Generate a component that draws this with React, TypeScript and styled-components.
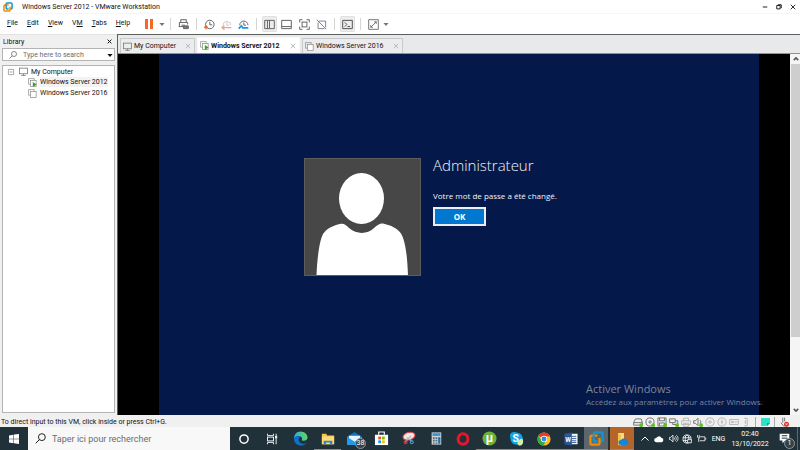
import React from "react";
import styled, { createGlobalStyle, css } from "styled-components";

const GlobalStyle = createGlobalStyle`
  *, *::before, *::after { box-sizing: border-box; }
  html, body { margin: 0; }
  body { font-family: Roboto, "Open Sans", sans-serif; font-size: 7px; line-height: 10px; color: #111; overflow: hidden; }
  button, input { font: inherit; color: inherit; border: 0; padding: 0; margin: 0; background: none; }
  button { display: flex; align-items: center; justify-content: center; white-space: nowrap; }
  ul { list-style: none; margin: 0; padding: 0; }
  svg { display: block; flex: none; overflow: visible; }
`;

const Screen = styled.div`
  display: flex;
  flex-direction: column;
  height: 100vh;
  background: #fff;
`;

const TitleBar = styled.header`
  display: flex;
  align-items: center;
  height: 13px;
  padding-left: 3px;
  gap: 9px;
  flex: none;
`;
const Title = styled.h1`
  flex: 1;
  margin: 0;
  font-size: 7px;
  font-weight: 400;
  white-space: nowrap;
`;
const WindowButtons = styled.div`
  display: flex;
  gap: 4px;
  padding-right: 2px;
`;
const WindowButton = styled.button`
  width: 10px;
  height: 12px;
`;

const MenuRow = styled.div`
  display: flex;
  align-items: center;
  height: 21px;
  flex: none;
  border-top: 1px solid #f6f6f6;
`;
const Menus = styled.nav`
  display: flex;
  gap: 9px;
  padding: 0 0 3px 7px;
  width: 140px;
`;
const MenuButton = styled.button``;
const Toolbar = styled.div`
  display: flex;
  align-items: center;
`;
const Tool = styled.button<{ $active?: boolean; $width?: number }>`
  width: ${(p) => p.$width ?? 15}px;
  height: 16px;
  margin: 0 1px;
  border-radius: 2px;
  ${(p) => p.$active && css`background: #ededed; box-shadow: inset 0 0 0 1px #e0e0e0;`}
`;
const Separator = styled.span`
  width: 1px;
  height: 12px;
  margin: 0 4px;
  background: #d4d4d4;
`;

const Workspace = styled.div`
  display: flex;
  flex: 1;
  min-height: 0;
`;

const Sidebar = styled.aside`
  display: flex;
  flex-direction: column;
  width: 117px;
  flex: none;
  padding: 0 2px 2px;
  background: #f0f0f1;
  border-top: 1px solid #e2e2e2;
`;
const SidebarHeader = styled.div`
  display: flex;
  align-items: center;
  justify-content: space-between;
  height: 13px;
  padding: 0 3px 0 1px;
`;
const SidebarTitle = styled.h2`
  margin: 0;
  font-size: 7px;
  font-weight: 400;
`;
const SearchBox = styled.label`
  display: flex;
  align-items: center;
  height: 13px;
  margin-bottom: 4px;
  padding: 0 1px 0 6px;
  gap: 6px;
  background: #fff;
  border: 1px solid #b4b4b4;
`;
const SearchInput = styled.input`
  flex: 1;
  min-width: 0;
  outline: 0;
  &::placeholder { color: #6c6c6c; opacity: 1; }
`;
const Tree = styled.ul`
  flex: 1;
  padding: 0 4px;
  background: #fff;
  border: 1px solid #b4b4b4;
`;
const TreeRow = styled.div<{ $level?: number }>`
  display: flex;
  align-items: center;
  height: ${(p) => (p.$level ? 10 : 11)}px;
  margin-bottom: ${(p) => (p.$level ? 1 : 0)}px;
  padding-left: ${(p) => (p.$level ? 21 : 1)}px;
  gap: 3px;
  white-space: nowrap;
`;
const TreeLabel = styled.span<{ $selected?: boolean }>`
  background: ${(p) => (p.$selected ? "#f3f3f3" : "transparent")};
`;
const TreeToggle = styled.button`
  margin-right: 2px;
`;

const Main = styled.main`
  display: flex;
  flex-direction: column;
  flex: 1;
  min-width: 0;
  border-top: 1px solid #5b605d;
  border-left: 1px solid #5b605d;
`;
const Tabs = styled.div`
  display: flex;
  align-items: flex-end;
  height: 19px;
  padding-left: 2px;
  gap: 2px;
  flex: none;
  background: #e8e9eb;
  border-bottom: 1px solid #8f9398;
`;
const Tab = styled.div<{ $active?: boolean; $width: number }>`
  display: flex;
  align-items: center;
  width: ${(p) => p.$width}px;
  height: ${(p) => (p.$active ? 16 : 15)}px;
  padding: 0 3px 0 2px;
  gap: 2px;
  background: ${(p) => (p.$active ? "#fff" : "#ebecee")};
  border: 1px solid ${(p) => (p.$active ? "#f8f8f8" : "#c9cacc")};
  border-bottom: 0;
  font-weight: ${(p) => (p.$active ? 700 : 400)};
`;
const TabLabel = styled.button`
  flex: 1;
  justify-content: flex-start;
`;

const Console = styled.div`
  display: flex;
  flex: 1;
  min-height: 0;
  background: #000;
`;
const GuestArea = styled.div`
  position: relative;
  display: flex;
  flex: 1;
  padding: 0 31px 0 41px;
  font-family: "Open Sans", "Noto Sans", sans-serif;
`;
const GuestScreen = styled.section`
  display: flex;
  flex: 1;
  align-items: flex-start;
  gap: 12px;
  padding: 104px 0 0 145px;
  background: #041849;
`;
const Avatar = styled.svg`
  width: 117px;
  height: 118px;
  background: #474747;
`;
const Account = styled.div`
  display: flex;
  flex-direction: column;
  align-items: flex-start;
  color: #f2f4f8;
`;
const AccountName = styled.h2`
  margin: -4px 0 14px;
  font-size: 15px;
  font-weight: 300;
  line-height: 22px;
`;
const AccountMessage = styled.p`
  margin: 0 0 5px;
  font-size: 8px;
  line-height: 12px;
`;
const OkButton = styled.button`
  width: 53px;
  height: 19px;
  background: #0078d0;
  border: 2px solid #e9eef8;
  font-size: 8px;
  font-weight: 700;
  color: #fff;
`;
const Watermark = styled.div`
  position: absolute;
  left: 468px;
  bottom: 7px;
  color: #7f8596;
  font-size: 8px;
  line-height: 12px;
  white-space: nowrap;
`;
const WatermarkTitle = styled.div`
  font-size: 11px;
  line-height: 14px;
`;

const Scrollbar = styled.div`
  display: flex;
  flex-direction: column;
  align-items: stretch;
  width: 10px;
  background: #f5f5f5;
  padding-left: 1px;
`;
const ScrollButton = styled.button`
  height: 10px;
  flex: none;
`;
const ScrollTrack = styled.div`
  flex: 1;
`;
const ScrollThumb = styled.div`
  height: 80%;
  background: #cecece;
`;

const StatusBar = styled.footer`
  display: flex;
  align-items: center;
  justify-content: space-between;
  height: 12px;
  flex: none;
  padding: 1px 11px 0 1px;
  background: #f0f0f1;
  white-space: nowrap;
`;
const Devices = styled.div`
  display: flex;
  align-items: center;
  gap: 2px;
`;
const Device = styled.button<{ $off?: boolean }>`
  width: 10px;
  height: 11px;
  opacity: ${(p) => (p.$off ? 0.45 : 1)};
`;
const DeviceLine = styled.span`
  width: 1px;
  height: 10px;
  margin: 0 2px;
  background: #aaa;
`;

const Taskbar = styled.footer`
  display: flex;
  align-items: stretch;
  height: 23px;
  flex: none;
  background: #20313a;
  color: #fff;
`;
const StartButton = styled.button`
  width: 28px;
  flex: none;
`;
const TaskSearch = styled.label`
  display: flex;
  align-items: center;
  width: 202px;
  flex: none;
  gap: 6px;
  padding-left: 7px;
  background: #f8f8f8;
  color: #444;
  font-size: 9px;
`;
const TaskApps = styled.div`
  display: flex;
  flex: 1;
`;
const TaskApp = styled.button<{ $wide?: boolean; $open?: boolean; $tint?: string }>`
  position: relative;
  flex: none;
  width: ${(p) => (p.$wide ? 28 : p.$tint ? 24 : 27)}px;
  margin-right: ${(p) => (p.$tint ? 2 : 0)}px;
  background: ${(p) => p.$tint ?? "transparent"};
  ${(p) => p.$open && css`box-shadow: inset 0 -1px 0 #8f8b84;`}
`;
const Badge = styled.span`
  position: absolute;
  right: 2px;
  bottom: 1px;
  min-width: 11px;
  height: 11px;
  border-radius: 6px;
  background: #35434a;
  border: 1px solid #8d979b;
  font-size: 7px;
  line-height: 9px;
  text-align: center;
`;
const Tray = styled.div`
  display: flex;
  flex: none;
  align-items: center;
`;
const TrayButton = styled.button`
  width: 14px;
  height: 23px;
`;
const Language = styled.button`
  width: 21px;
`;
const Clock = styled.time`
  display: flex;
  flex-direction: column;
  align-items: center;
  width: 42px;
  line-height: 10px;
`;
const NotificationButton = styled.button`
  position: relative;
  width: 26px;
  height: 23px;
`;
const ShowDesktop = styled.button`
  width: 3px;
  height: 23px;
  border-left: 1px solid #5c686e;
`;

type SvgProps = { size?: number; children: React.ReactNode; color?: string; w?: number };
const Icon = ({ size = 12, color = "#555", w = 1, children }: SvgProps) => (
  <svg width={size} height={size} viewBox="0 0 16 16" fill="none" stroke={color} strokeWidth={w * (16 / size)} aria-hidden="true">
    {children}
  </svg>
);

const VmwareIcon = ({ size = 10 }: { size?: number }) => (
  <svg width={size} height={size} viewBox="0 0 16 16" fill="none" strokeWidth="2.4" aria-hidden="true">
    <path d="M5 4V3a1.5 1.5 0 0 1 1.500-1.500H13A1.500 1.500 0 0 1 14.500 3v6.500A1.500 1.500 0 0 1 13 11h-1" stroke="#1296d4" />
    <path d="M9 4.800H3A1.500 1.500 0 0 0 1.500 6.300V13A1.500 1.500 0 0 0 3 14.500h6.700a1.500 1.500 0 0 0 1.500-1.500V7.500" stroke="#f38b00" />
    <path d="M5 4v5.500A1.500 1.500 0 0 0 6.500 11H9" stroke="#1296d4" />
  </svg>
);
const Monitor = () => (
  <Icon size={9} w={0.8} color="#777"><rect x="1" y="2" width="14" height="10" /><path d="M4 15h8M8 12v3" /></Icon>
);
const VmIcon = ({ running }: { running?: boolean }) => (
  <Icon size={9} w={0.7} color="#888">
    <path d="M4 11H1V1h10v3" /><rect x="4.500" y="4.500" width="10" height="10.500" fill="#fff" />
    {running && <path d="M8.500 7v9l7-4.500z" fill="#35a51c" stroke="none" />}
  </Icon>
);
const Cross = ({ color = "#999", size = 6 }: { color?: string; size?: number }) => (
  <Icon size={size} color={color}><path d="M2 2l12 12M14 2L2 14" /></Icon>
);
const Caret = ({ color = "#777" }: { color?: string }) => (
  <Icon size={6} color={color}><path d="M1 5h14L8 13z" fill={color} stroke="none" /></Icon>
);
const Magnifier = ({ size, color }: { size: number; color: string }) => (
  <Icon size={size} color={color}><circle cx="10" cy="6" r="5" /><path d="M6.500 9.500L1 15" /></Icon>
);
const ClockIcon = ({ main, accent, kind }: { main: string; accent: string; kind: "take" | "back" | "manage" }) => (
  <Icon size={11} color={main}>
    {kind === "take" && <><circle cx="8.500" cy="8" r="6.200" /><path d="M8.500 4v4.500H12" /><path d="M0 12h6M3 9v6" stroke={accent} strokeWidth="2" /></>}
    {kind === "back" && <><path d="M3 9a5.500 5.500 0 0 1 11 0M8.500 5v4h3" /><path d="M15 12.500H2M5 9.500l-3.500 3 3.500 3" stroke={accent} strokeWidth="2" /></>}
    {kind === "manage" && <><path d="M2.500 9a6 6 0 1 1 12 0M8.500 5v4h3" /><path d="M1 14l4-4 2 3h8" stroke={accent} strokeWidth="2.600" /></>}
  </Icon>
);

const green = <circle cx="13" cy="13" r="3" fill="#55c51e" stroke="none" />;
const deviceIcons: { name: string; off?: boolean; art: React.ReactNode }[] = [
  { name: "Hard disk", art: <><path d="M4 3h9l2 6v4H1V9z M1 9h14" />{green}</> },
  { name: "CD/DVD", art: <><circle cx="8" cy="8" r="6.500" /><circle cx="8" cy="8" r="1.800" />{green}</> },
  { name: "Floppy", art: <><path d="M1.500 1.500h13v13h-13z M4 1.500V6h8V1.500 M4 14V9.500h8V14" />{green}</> },
  { name: "Network adapter", art: <><path d="M1 3h9v6H1z M6 9v3h8V6h-4" />{green}</> },
  { name: "Printer", off: true, art: <path d="M4 6V2h8v4 M1 6h14v6H1z M4 10h8v5H4z" /> },
  { name: "Sound", art: <><path d="M1 6h3l4-4v12l-4-4H1z M11 5c2 2 2 4 0 6" />{green}</> },
  { name: "USB 1", off: true, art: <><circle cx="8" cy="8" r="6.500" /><circle cx="8" cy="8" r="2" /></> },
  { name: "USB 2", off: true, art: <><circle cx="8" cy="8" r="6.500" /><path d="M8 4v8M6 8h4" /></> },
  { name: "Serial port", off: true, art: <path d="M1 4h14v8H1z M4 7h3v2H4z M9 8h4" /> },
  { name: "Bluetooth", off: true, art: <path d="M5 2h5v12H5 M7 5v6" /> },
];

const taskApps: { name: string; wide?: boolean; open?: boolean; badge?: string; art: React.ReactNode }[] = [
  { name: "Cortana", wide: true, art: <Icon size={12} w={1.500} color="#fff"><circle cx="8" cy="8" r="5.500" /></Icon> },
  { name: "Task view", wide: true, art: <Icon size={12} color="#e8ebec"><path d="M2 1v2.500h8V1 M2 15v-2.500h8V15" /><rect x="2" y="5.500" width="8" height="5" /><path d="M13.500 1v14" /><path d="M13.500 4v3" strokeWidth="3" /></Icon> },
  {
    name: "Microsoft Edge", wide: true, art: (
      <svg width="15" height="15" viewBox="0 0 16 16">
        <defs>
          <linearGradient id="edgeTop" x1="0" x2="1" y1="0.500" y2="0.300"><stop stopColor="#28a8e8" /><stop offset="1" stopColor="#66d957" /></linearGradient>
        </defs>
        <path d="M1 8C1 3.500 4 .5 8 .5s7.500 3 7.500 6.500c0 2-1.500 3.500-4 3.500-1.500 0-2.500-.5-2-1.500C10 7 9 5.500 6.500 5.500 4 5.500 1.500 6.500 1 8z" fill="url(#edgeTop)" />
        <path d="M1 8c1-2.500 5-3.500 6.800-1.500C5 7.500 5.500 13 10 13.500c2 .2 3.500-.5 4.500-1C13 14.800 10.500 15.500 8.500 15.500 4 15.500.7 12 1 8z" fill="#0c70c7" />
      </svg>
    ),
  },
  {
    name: "File Explorer", open: true, art: (
      <svg width="14" height="14" viewBox="0 0 16 16"><path d="M1 2h5l1 2h8v10H1z" fill="#f7c74a" /><path d="M1 5h14v9H1z" fill="#ffdb73" /><path d="M3 14v-4h10v4h-3v-2H6v2z" fill="#3189d3" /></svg>
    ),
  },
  {
    name: "Mail", badge: "38", art: (
      <svg width="15" height="15" viewBox="0 0 16 16"><path d="M0 6l8-5 8 5v9H0z" fill="#0a73c8" /><path d="M2 5h12v3l-6 4-6-4z" fill="#e9f5fd" /><path d="M0 6l8 5.500L16 6v9H0z" fill="#229be8" /></svg>
    ),
  },
  {
    name: "Microsoft Store", art: (
      <svg width="15" height="15" viewBox="0 0 16 16"><path d="M5 4V1h6v3" fill="none" stroke="#fff" strokeWidth="1.200" /><path d="M1 4h14v11H1z" fill="#fff" /><path d="M4.500 6h3v3h-3z" fill="#f05022" /><path d="M8.500 6h3v3h-3z" fill="#7fba00" /><path d="M4.500 10h3v3h-3z" fill="#00a4ef" /><path d="M8.500 10h3v3h-3z" fill="#ffb900" /></svg>
    ),
  },
  {
    name: "Snipping Tool", art: (
      <svg width="15" height="15" viewBox="0 0 16 16"><ellipse cx="8.500" cy="5.500" rx="6.500" ry="4" transform="rotate(-15 8.500 5.500)" fill="#f3e9e9" stroke="#d64b4b" strokeWidth="1.200" /><path d="M4 12l7-7M12 11L6 7" stroke="#a9b6bd" strokeWidth="1.300" /><circle cx="5" cy="12" r="1.600" fill="none" stroke="#d33" strokeWidth="1.300" /><circle cx="11.500" cy="12" r="1.600" fill="none" stroke="#3b9be0" strokeWidth="1.300" /></svg>
    ),
  },
  {
    name: "Calculator", art: (
      <svg width="14" height="15" viewBox="0 0 16 16"><path d="M3 1h11v14H3z" fill="#c9d3d8" /><path d="M4 2h9v3H4z" fill="#3a92d0" /><path d="M4.500 6.500h2v2h-2zM7.500 6.500h2v2h-2zM4.500 9.500h2v2h-2zM7.500 9.500h2v2h-2zM4.500 12.500h2v1.500h-2zM7.500 12.500h2v1.500h-2z" fill="#5b6870" /><path d="M10.500 6.500h2.500V14h-2.500z" fill="#1f6ea8" /></svg>
    ),
  },
  { name: "Opera", art: <svg width="14" height="14" viewBox="0 0 16 16"><ellipse cx="8" cy="8" rx="5.600" ry="6" fill="none" stroke="#e5182c" strokeWidth="3.400" /><path d="M4.600 8c0-3 1.400-5 3.400-5" stroke="#b20d1c" fill="none" /></svg> },
  {
    name: "uTorrent", open: true, art: (
      <svg width="15" height="15" viewBox="0 0 16 16"><circle cx="8" cy="8" r="7.500" fill="#6fb03c" /><text x="8" y="11.500" fontSize="13" fontWeight="700" textAnchor="middle" fill="#fff">µ</text></svg>
    ),
  },
  {
    name: "Skype", open: true, art: (
      <svg width="15" height="15" viewBox="0 0 16 16"><path d="M5 1a4 4 0 0 1 3 .5A6.500 6.500 0 0 1 14.500 9 4 4 0 0 1 9 14.500 6.500 6.500 0 0 1 1.500 7 4 4 0 0 1 5 1z" fill="#10a5e8" /><text x="7" y="11.500" fontSize="11" fontWeight="700" textAnchor="middle" fill="#fff">S</text><path d="M9 13c0-3 2-4 5-5 2 3 1 7-2 7.500-1.500 0-2.500-.5-3-2.500z" fill="#d8edaa" /></svg>
    ),
  },
  {
    name: "Google Chrome", open: true, art: (
      <svg width="14" height="14" viewBox="0 0 16 16"><circle cx="8" cy="8" r="7.500" fill="#fbc116" /><path d="M8 8L1.500 4.250A7.500 7.500 0 0 1 14.500 4.250L14.700 5H8z" fill="#e33b2e" /><path d="M1.500 4.250A7.500 7.500 0 0 0 7.300 15.500L10.800 9.500 8 8 5 9.500z" fill="#2da94f" /><circle cx="8" cy="8" r="3.600" fill="#fff" /><circle cx="8" cy="8" r="2.800" fill="#3f82ee" /></svg>
    ),
  },
  {
    name: "Word", open: true, art: (
      <svg width="14" height="14" viewBox="0 0 16 16"><path d="M7 2h8.500v12H7z" fill="#f2f6fb" /><path d="M9 5h5M9 7.500h5M9 10h5M9 12h5" stroke="#2b579a" /><path d="M.5 2L9 .5v15L.5 14z" fill="#2b579a" /><text x="4.800" y="11" fontSize="7.500" fontWeight="700" textAnchor="middle" fill="#fff">W</text></svg>
    ),
  },
];

export default function App() {
  return (
    <>
      <GlobalStyle />
      <Screen>
        <TitleBar>
          <VmwareIcon />
          <Title>Windows Server 2012 - VMware Workstation</Title>
          <WindowButtons>
            <WindowButton aria-label="Minimize"><Icon size={6} color="#222"><path d="M2 8h12" /></Icon></WindowButton>
            <WindowButton aria-label="Restore"><Icon size={6} color="#222"><path d="M2 4h9v9H2z M5 2h9v9" /></Icon></WindowButton>
            <WindowButton aria-label="Close"><Cross color="#333" /></WindowButton>
          </WindowButtons>
        </TitleBar>

        <MenuRow>
          <Menus>
            <MenuButton><span><u>F</u>ile</span></MenuButton>
            <MenuButton><span><u>E</u>dit</span></MenuButton>
            <MenuButton><span><u>V</u>iew</span></MenuButton>
            <MenuButton><span>V<u>M</u></span></MenuButton>
            <MenuButton><span><u>T</u>abs</span></MenuButton>
            <MenuButton><span><u>H</u>elp</span></MenuButton>
          </Menus>
          <Toolbar>
            <Tool aria-label="Suspend" $width={16}>
              <svg width="8" height="10" viewBox="0 0 8 10"><path d="M0 0h3v10H0zM5 0h3v10H5z" fill="#f26a2a" /></svg>
            </Tool>
            <Tool aria-label="Power options" $width={6}><Caret /></Tool>
            <Separator />
            <Tool aria-label="Send Ctrl+Alt+Del">
              <Icon size={11} color="#666"><path d="M4 5V1h8v4 M2 11V5h12v3 M5 9h5M1 11h8" /><path d="M8 10h7v4H8z" fill="#777" /></Icon>
            </Tool>
            <Separator />
            <Tool aria-label="Take snapshot"><ClockIcon kind="take" main="#666" accent="#f26a2a" /></Tool>
            <Tool aria-label="Revert snapshot"><ClockIcon kind="back" main="#ccc" accent="#f5a27c" /></Tool>
            <Tool aria-label="Manage snapshots"><ClockIcon kind="manage" main="#666" accent="#2196e0" /></Tool>
            <Separator />
            <Tool aria-label="Show library" $active><Icon size={11} color="#666"><path d="M1 2h14v12H1z M5 2v12 M8 2v12" /></Icon></Tool>
            <Tool aria-label="Thumbnail bar"><Icon size={11} color="#666"><path d="M1 2h14v12H1z M1 11h14" /></Icon></Tool>
            <Tool aria-label="Full screen" $width={16}>
              <Icon size={11} color="#666"><path d="M1 5V1h4 M11 1h4v4 M15 11v4h-4 M5 15H1v-4" /><rect x="4.500" y="4.500" width="7" height="7" /></Icon>
            </Tool>
            <Tool aria-label="Unity"><Icon size={11} color="#7b8794"><path d="M4 3h10v9 M3 5v9h9 M1 1l14 14" /></Icon></Tool>
            <Separator />
            <Tool aria-label="Console view" $active><Icon size={11}><path d="M1 2h14v12H1z M4 5l3 3-3 3 M8 11h4" /></Icon></Tool>
            <Separator />
            <Tool aria-label="Stretch guest"><Icon size={11} color="#777"><path d="M1 1h14v14H1z M9 4h3v3 M12 4L4 12 M4 9v3h3" /></Icon></Tool>
            <Tool aria-label="Stretch options" $width={6}><Caret /></Tool>
          </Toolbar>
        </MenuRow>

        <Workspace>
          <Sidebar>
            <SidebarHeader>
              <SidebarTitle>Library</SidebarTitle>
              <button aria-label="Close library"><Cross color="#111" size={5} /></button>
            </SidebarHeader>
            <SearchBox>
              <Magnifier size={8} color="#888" />
              <SearchInput aria-label="Search library" placeholder="Type here to search" />
              <button aria-label="Search options"><Caret color="#111" /></button>
            </SearchBox>
            <Tree>
              <li>
                <TreeRow>
                  <TreeToggle aria-label="Collapse My Computer"><Icon size={6} color="#aaa"><path d="M1 1h14v14H1z M4 8h8" /></Icon></TreeToggle>
                  <Monitor />
                  <TreeLabel>My Computer</TreeLabel>
                </TreeRow>
                <ul>
                  <li><TreeRow $level={1}><VmIcon running /><TreeLabel $selected>Windows Server 2012</TreeLabel></TreeRow></li>
                  <li><TreeRow $level={1}><VmIcon /><TreeLabel>Windows Server 2016</TreeLabel></TreeRow></li>
                </ul>
              </li>
            </Tree>
          </Sidebar>

          <Main>
            <Tabs>
              <Tab $width={75}><Monitor /><TabLabel>My Computer</TabLabel><button aria-label="Close My Computer"><Cross color="#bbb" /></button></Tab>
              <Tab $width={103} $active><VmIcon running /><TabLabel>Windows Server 2012</TabLabel><button aria-label="Close Windows Server 2012"><Cross color="#bbb" /></button></Tab>
              <Tab $width={101}><VmIcon /><TabLabel>Windows Server 2016</TabLabel><button aria-label="Close Windows Server 2016"><Cross color="#bbb" /></button></Tab>
            </Tabs>
            <Console>
              <GuestArea>
                <GuestScreen>
                  <Avatar viewBox="0 0 117 118" role="img" aria-label="User picture">
                    <ellipse cx="57.500" cy="40.500" rx="22.500" ry="25.500" fill="#fff" />
                    <path d="M12.500 118C13 103 15 84 19 76c4-6 11-8.500 17-10 4-.8 6 1 9 4 8 6.500 18 6.500 25 0 4-3.500 6-5 9-4.500 7 1.500 14 4.500 18 10 5 8 6.500 27 7 42.500z" fill="#fff" />
                    <rect x=".5" y=".5" width="116" height="117" fill="none" stroke="#5c5c5c" />
                  </Avatar>
                  <Account>
                    <AccountName>Administrateur</AccountName>
                    <AccountMessage>Votre mot de passe a été changé.</AccountMessage>
                    <OkButton>OK</OkButton>
                  </Account>
                </GuestScreen>
                <Watermark>
                  <WatermarkTitle>Activer Windows</WatermarkTitle>
                  Accédez aux paramètres pour activer Windows.
                </Watermark>
              </GuestArea>
              <Scrollbar>
                <ScrollButton aria-label="Scroll up"><Icon size={6} w={1.500} color="#555"><path d="M2 11l6-6 6 6" /></Icon></ScrollButton>
                <ScrollTrack><ScrollThumb /></ScrollTrack>
                <ScrollButton aria-label="Scroll down"><Icon size={6} w={1.500} color="#555"><path d="M2 5l6 6 6-6" /></Icon></ScrollButton>
              </Scrollbar>
            </Console>
          </Main>
        </Workspace>

        <StatusBar>
          <span>To direct input to this VM, click inside or press Ctrl+G.</span>
          <Devices>
            {deviceIcons.map((d) => (
              <Device key={d.name} aria-label={d.name} $off={d.off}><Icon size={10} color="#777">{d.art}</Icon></Device>
            ))}
            <DeviceLine />
            <Device aria-label="Messages">
              <svg width="9" height="8" viewBox="0 0 9 8"><path d="M0 0h9v5L6 8H0z" fill="#2fe0c8" /><path d="M9 5H6v3z" fill="#149c8d" /></svg>
            </Device>
            <DeviceLine />
            <Device aria-label="Input not grabbed">
              <Icon size={10} color="#777"><path d="M6 1v8 M9 1v6 M3 9l4 5h6" /><circle cx="12" cy="11.500" r="4" fill="#e5352d" stroke="none" /><path d="M10.500 10l3 3M13.500 10l-3 3" stroke="#fff" strokeWidth="1" /></Icon>
            </Device>
          </Devices>
        </StatusBar>

        <Taskbar>
          <StartButton aria-label="Start">
            <svg width="10" height="10" viewBox="0 0 10 10"><path d="M0 1.400l4.500-.7v4H0zM5 .6l5-.6v4.700H5zM0 5.300h4.500v4L0 8.600zM5 5.300h5V10l-5-.7z" fill="#fff" /></svg>
          </StartButton>
          <TaskSearch>
            <Magnifier size={11} color="#222" />
            <SearchInput aria-label="Taper ici pour rechercher" placeholder="Taper ici pour rechercher" />
          </TaskSearch>
          <TaskApps>
            {taskApps.map((a) => (
              <TaskApp key={a.name} aria-label={a.name} $wide={a.wide} $open={a.open}>
                {a.art}
                {a.badge && <Badge>{a.badge}</Badge>}
              </TaskApp>
            ))}
            <TaskApp aria-label="VMware Workstation" $tint="#5b676c" $open><VmwareIcon size={15} /></TaskApp>
            <TaskApp aria-label="OneDrive folder" $tint="#b5652a" $open>
              <svg width="13" height="14" viewBox="0 0 13 14"><path d="M2 1h6v12H2z" fill="#ffd97a" /><path d="M2 1l3 2v11l-3-2z" fill="#f2c04c" /><path d="M5 13a2.500 2.500 0 0 1 0-5 3 3 0 0 1 5-.5A3 3 0 0 1 11 13z" fill="#1384d8" /></svg>
            </TaskApp>
          </TaskApps>
          <Tray>
            <TrayButton aria-label="Hidden icons"><Icon size={8} color="#fff"><path d="M1 11l7-7 7 7" /></Icon></TrayButton>
            <TrayButton aria-label="OneDrive"><Icon size={10}><path d="M3.500 13a3 3 0 0 1 0-6.500 4.500 4.500 0 0 1 8-.5A3.600 3.600 0 0 1 12.500 13z" fill="#fff" stroke="none" /></Icon></TrayButton>
            <TrayButton aria-label="Volume"><Icon size={9} w={0.8} color="#fff"><path d="M1 6h2l4-4v12l-4-4H1z M9 6c1 1 1 3 0 4 M11 4c2.500 2 2.500 6 0 8 M13 2c4 3 4 9 0 12" /></Icon></TrayButton>
            <TrayButton aria-label="Network"><Icon size={10} w={0.8} color="#fff"><circle cx="8" cy="8" r="6.500" /><ellipse cx="8" cy="8" rx="3" ry="6.500" /><path d="M1.500 6h13M1.500 10.500h13" /><path d="M9 9h6v5H9z" fill="#20313a" /></Icon></TrayButton>
            <TrayButton aria-label="Battery"><Icon size={9} w={0.8} color="#fff"><path d="M5 5h9v7H5 M15.500 7v3 M1 2v4l3 2V2 M3 8v6" /></Icon></TrayButton>
            <Language>ENG</Language>
            <Clock><span>02:40</span><span>13/10/2022</span></Clock>
            <NotificationButton aria-label="Notifications">
              <Icon size={11}><path d="M1 1h14v10H9l-4 4v-4H1z" fill="#fff" stroke="none" /><path d="M4 4h8M4 7.500h8" stroke="#20313a" /></Icon>
              <Badge>1</Badge>
            </NotificationButton>
            <ShowDesktop aria-label="Show desktop" />
          </Tray>
        </Taskbar>
      </Screen>
    </>
  );
}
